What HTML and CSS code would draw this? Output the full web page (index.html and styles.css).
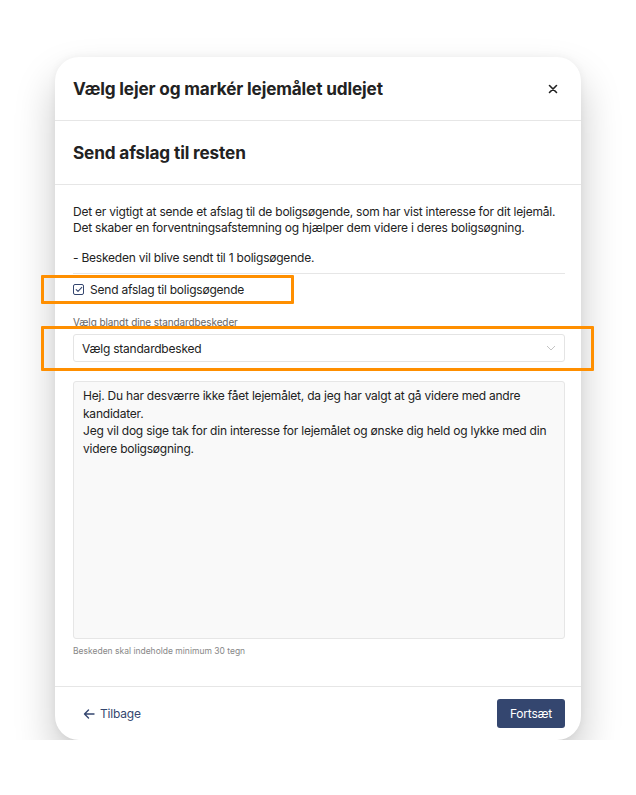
FILE: index.html
```html
<!DOCTYPE html>
<html lang="da">
<head>
<meta charset="utf-8">
<link rel="stylesheet" href="styles.css">
</head>
<body>
<div class="page">
  <div class="modal">
    <div class="modal-head">
      <h1 class="modal-title">Vælg lejer og markér lejemålet udlejet</h1>
      <button class="close" aria-label="Luk">
        <svg width="10" height="10" viewBox="0 0 10 10"><path d="M1.5 1.5 L8.5 8.5 M8.5 1.5 L1.5 8.5" stroke="#222" stroke-width="1.6" stroke-linecap="round"/></svg>
      </button>
    </div>
    <div class="step-head">
      <h2 class="step-title">Send afslag til resten</h2>
    </div>
    <div class="modal-body">
      <p class="intro">Det er vigtigt at sende et afslag til de boligsøgende, som har vist interesse for dit lejemål.<br>Det skaber en forventningsafstemning og hjælper dem videre i deres boligsøgning.</p>
      <p class="count">- Beskeden vil blive sendt til 1 boligsøgende.</p>
      <div class="check-row">
        <span class="checkbox">
          <svg width="8" height="7" viewBox="0 0 8 7"><path d="M1.2 3.6 L3 5.3 L6.8 1.4" fill="none" stroke="#34466f" stroke-width="1.1" stroke-linecap="round" stroke-linejoin="round"/></svg>
        </span>
        <span class="check-label">Send afslag til boligsøgende</span>
      </div>
      <div class="field-label">Vælg blandt dine standardbeskeder</div>
      <div class="select">
        <span>Vælg standardbesked</span>
        <svg width="10" height="6" viewBox="0 0 10 6"><path d="M1 1 L5 5 L9 1" fill="none" stroke="#c4c4c4" stroke-width="1"/></svg>
      </div>
      <div class="textarea">Hej. Du har desværre ikke fået lejemålet, da jeg har valgt at gå videre med andre kandidater.<br>Jeg vil dog sige tak for din interesse for lejemålet og ønske dig held og lykke med din videre boligsøgning.</div>
      <div class="hint">Beskeden skal indeholde minimum 30 tegn</div>
    </div>
    <div class="modal-foot">
      <button class="back">
        <svg width="12" height="10" viewBox="0 0 12 10"><path d="M11 5 H1.5 M5.5 1 L1.5 5 L5.5 9" fill="none" stroke="#34466f" stroke-width="1.4" stroke-linecap="round" stroke-linejoin="round"/></svg>
        <span>Tilbage</span>
      </button>
      <button class="primary">Fortsæt</button>
    </div>
    <div class="highlight hl-check"></div>
    <div class="highlight hl-select"></div>
  </div>
</div>
</body>
</html>
```

FILE: styles.css
```css
* { box-sizing: border-box; }
html, body { margin: 0; padding: 0; background: #fff; }
body { font-family: Inter, "Noto Sans", sans-serif; color: #222; }
.page { padding: 57px 0 0 55px; }
.modal {
  position: relative;
  width: 526px;
  height: 683px;
  background: #fff;
  border-radius: 24px;
  box-shadow: 0 22px 40px rgba(0,0,0,0.22), 0 0 8px rgba(0,0,0,0.05);
  display: flex;
  flex-direction: column;
}
.modal-head {
  height: 64px;
  padding: 0 23px 0 18px;
  display: flex;
  align-items: center;
  justify-content: space-between;
  border-bottom: 1px solid #e6e6e6;
}
.modal-title { margin: 0; font-size: 17.2px; font-weight: 700; color: #222; letter-spacing: -0.15px; }
.close { border: 0; background: none; padding: 0; display: flex; align-items: center; }
.step-head {
  height: 64px;
  padding: 0 18px;
  display: flex;
  align-items: center;
  border-bottom: 1px solid #e6e6e6;
}
.step-title { margin: 0; font-size: 17.2px; font-weight: 700; color: #222; letter-spacing: -0.15px; }
.modal-body { padding: 19px 16px 0 18px; flex: 1; }
.intro, .count { margin: 0; font-size: 12px; line-height: 16px; color: #222; letter-spacing: -0.22px; }
.count { margin-top: 14px; padding-bottom: 7px; border-bottom: 1px solid #e6e6e6; }
.check-row { display: flex; align-items: center; gap: 6px; height: 30px; }
.checkbox {
  width: 11px; height: 11px; border: 1px solid #34466f; border-radius: 2px;
  display: flex; align-items: center; justify-content: center;
}
.check-label { font-size: 12px; color: #222; letter-spacing: -0.22px; }
.field-label { margin-top: 12px; font-size: 10px; color: #666; line-height: 12px; letter-spacing: -0.1px; }
.select {
  margin-top: 6px;
  height: 28px;
  border: 1px solid #e4e4e4;
  border-radius: 3px;
  display: flex; align-items: center; justify-content: space-between;
  padding: 0 8px 0 8px;
  font-size: 12px; color: #222; letter-spacing: -0.22px;
}
.textarea {
  margin-top: 19px;
  height: 258px;
  background: #f9f9f9;
  border: 1px solid #e6e6e6;
  border-radius: 3px;
  padding: 5px 14px 5px 9px;
  font-size: 12px; line-height: 17.5px; color: #222; letter-spacing: -0.22px;
}
.hint { margin-top: 6px; font-size: 8.5px; color: #888; line-height: 12px; }
.modal-foot {
  height: 54px;
  border-top: 1px solid #e6e6e6;
  padding: 0 16px 0 28px;
  display: flex; align-items: center; justify-content: space-between;
}
.back {
  border: 0; background: none; padding: 0; display: flex; align-items: center; gap: 5px;
  font-family: inherit; font-size: 12px; color: #34466f; letter-spacing: -0.2px;
}
.primary {
  border: 0; background: #34466f; color: #fff; border-radius: 3px;
  width: 68px; height: 29px; font-family: inherit; font-size: 12px; letter-spacing: -0.2px;
}
.highlight { position: absolute; border: 3px solid #ff8f00; border-radius: 1px; }
.hl-check { left: -14px; top: 218px; width: 253px; height: 29px; }
.hl-select { left: -14px; top: 269px; width: 553px; height: 45px; }
```
